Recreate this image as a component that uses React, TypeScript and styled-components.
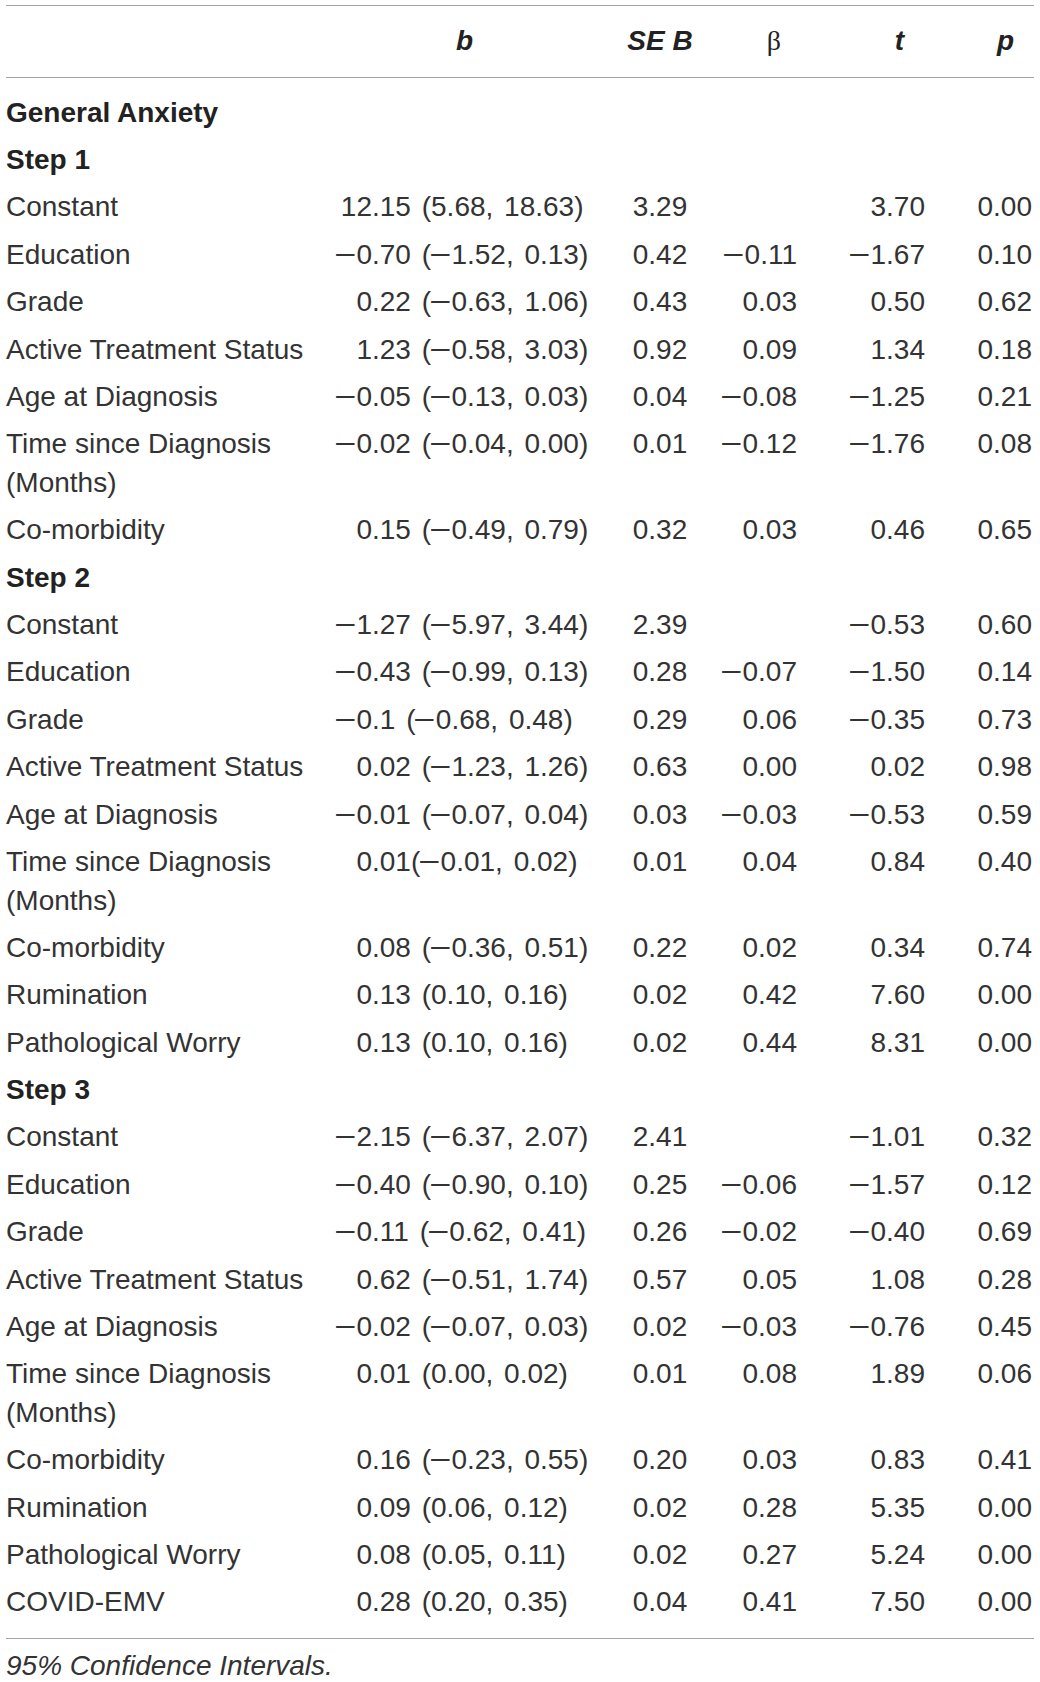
import React from "react";
import styled, { createGlobalStyle } from "styled-components";

const GlobalStyle = createGlobalStyle`
  html, body { margin: 0; padding: 0; background: #ffffff; }
  body {
    font-family: "Liberation Sans", Arial, Helvetica, sans-serif;
    font-size: 28px;
    color: #333333;
  }
`;

const RULE = "#a3a3a3";
const COLS = "324px 280px 100px 90px 128px 106px";

const Page = styled.div`
  padding: 5px 6px 0 6px;
  width: 1028px;
`;

const Table = styled.div`
  width: 1028px;
  border-top: 1px solid ${RULE};
`;

const Row = styled.div`
  display: grid;
  grid-template-columns: ${COLS};
`;

const HeadRow = styled(Row)`
  height: 71px;
  align-items: center;
  border-bottom: 1px solid ${RULE};
`;

const HeadCell = styled.div<{ $align?: string; $pl?: number; $pr?: number }>`
  font-weight: 700;
  font-style: italic;
  line-height: 38.6px;
  color: #222222;
  text-align: ${(p) => p.$align || "left"};
  padding-left: ${(p) => p.$pl ?? 0}px;
  padding-right: ${(p) => p.$pr ?? 0}px;
`;

const Beta = styled.span`
  font-family: "Liberation Serif", "Times New Roman", serif;
  font-style: normal;
  font-weight: 400;
`;

const Body = styled.div`
  padding: 11.3px 0 11.9px 0;
  border-bottom: 1px solid ${RULE};
`;

const SectionTitle = styled.div`
  font-weight: 700;
  line-height: 38.6px;
  padding: 4.4px 0;
  color: #222222;
`;

const Cell = styled.div<{ $align?: string; $pr?: number }>`
  line-height: 38.6px;
  padding: 4.4px ${(p) => p.$pr ?? 0}px 4.4px 0;
  text-align: ${(p) => p.$align || "left"};
  white-space: nowrap;
`;

const LabelCell = styled.div`
  line-height: 38.6px;
  padding: 4.4px 8px 4.4px 0;
`;

const EstCell = styled.div`
  line-height: 38.6px;
  padding: 4.4px 0;
  white-space: nowrap;
  word-spacing: 3px;
`;

const IntPart = styled.span`
  display: inline-block;
  width: 42px;
  text-align: right;
`;

const Minus = styled.span`
  display: inline-block;
  transform: scaleX(1.35);
  margin: 0 3px 0 1px;
  word-spacing: 0;
`;

const Footnote = styled.div`
  font-style: italic;
  line-height: 36px;
  padding-top: 9px;
`;

type DataRow = [string, string, string, string, string, string];

const sections: { title: string; rows: DataRow[] }[] = [
  {
    title: "Step 1",
    rows: [
      ["Constant", "12.15 (5.68, 18.63)", "3.29", "", "3.70", "0.00"],
      ["Education", "−0.70 (−1.52, 0.13)", "0.42", "−0.11", "−1.67", "0.10"],
      ["Grade", "0.22 (−0.63, 1.06)", "0.43", "0.03", "0.50", "0.62"],
      ["Active Treatment Status", "1.23 (−0.58, 3.03)", "0.92", "0.09", "1.34", "0.18"],
      ["Age at Diagnosis", "−0.05 (−0.13, 0.03)", "0.04", "−0.08", "−1.25", "0.21"],
      ["Time since Diagnosis (Months)", "−0.02 (−0.04, 0.00)", "0.01", "−0.12", "−1.76", "0.08"],
      ["Co-morbidity", "0.15 (−0.49, 0.79)", "0.32", "0.03", "0.46", "0.65"],
    ],
  },
  {
    title: "Step 2",
    rows: [
      ["Constant", "−1.27 (−5.97, 3.44)", "2.39", "", "−0.53", "0.60"],
      ["Education", "−0.43 (−0.99, 0.13)", "0.28", "−0.07", "−1.50", "0.14"],
      ["Grade", "−0.1 (−0.68, 0.48)", "0.29", "0.06", "−0.35", "0.73"],
      ["Active Treatment Status", "0.02 (−1.23, 1.26)", "0.63", "0.00", "0.02", "0.98"],
      ["Age at Diagnosis", "−0.01 (−0.07, 0.04)", "0.03", "−0.03", "−0.53", "0.59"],
      ["Time since Diagnosis (Months)", "0.01(−0.01, 0.02)", "0.01", "0.04", "0.84", "0.40"],
      ["Co-morbidity", "0.08 (−0.36, 0.51)", "0.22", "0.02", "0.34", "0.74"],
      ["Rumination", "0.13 (0.10, 0.16)", "0.02", "0.42", "7.60", "0.00"],
      ["Pathological Worry", "0.13 (0.10, 0.16)", "0.02", "0.44", "8.31", "0.00"],
    ],
  },
  {
    title: "Step 3",
    rows: [
      ["Constant", "−2.15 (−6.37, 2.07)", "2.41", "", "−1.01", "0.32"],
      ["Education", "−0.40 (−0.90, 0.10)", "0.25", "−0.06", "−1.57", "0.12"],
      ["Grade", "−0.11 (−0.62, 0.41)", "0.26", "−0.02", "−0.40", "0.69"],
      ["Active Treatment Status", "0.62 (−0.51, 1.74)", "0.57", "0.05", "1.08", "0.28"],
      ["Age at Diagnosis", "−0.02 (−0.07, 0.03)", "0.02", "−0.03", "−0.76", "0.45"],
      ["Time since Diagnosis (Months)", "0.01 (0.00, 0.02)", "0.01", "0.08", "1.89", "0.06"],
      ["Co-morbidity", "0.16 (−0.23, 0.55)", "0.20", "0.03", "0.83", "0.41"],
      ["Rumination", "0.09 (0.06, 0.12)", "0.02", "0.28", "5.35", "0.00"],
      ["Pathological Worry", "0.08 (0.05, 0.11)", "0.02", "0.27", "5.24", "0.00"],
      ["COVID-EMV", "0.28 (0.20, 0.35)", "0.04", "0.41", "7.50", "0.00"],
    ],
  },
];

function Num({ text }: { text: string }) {
  const parts = text.split("−");
  return (
    <>
      {parts.map((part, i) => (
        <React.Fragment key={i}>
          {i > 0 && <Minus>−</Minus>}
          {part}
        </React.Fragment>
      ))}
    </>
  );
}

function Estimate({ text }: { text: string }) {
  const dot = text.indexOf(".");
  const intPart = text.slice(0, dot);
  const rest = text.slice(dot);
  return (
    <EstCell>
      <IntPart>
        <Num text={intPart} />
      </IntPart>
      <Num text={rest} />
    </EstCell>
  );
}

function DataLine({ row }: { row: DataRow }) {
  const [label, b, se, beta, t, p] = row;
  return (
    <Row>
      <LabelCell>{label}</LabelCell>
      <Estimate text={b} />
      <Cell $align="center">
        <Num text={se} />
      </Cell>
      <Cell $align="right" $pr={3}>
        <Num text={beta} />
      </Cell>
      <Cell $align="right" $pr={3}>
        <Num text={t} />
      </Cell>
      <Cell $align="right" $pr={2}>
        <Num text={p} />
      </Cell>
    </Row>
  );
}

export default function App() {
  return (
    <>
      <GlobalStyle />
      <Page>
        <Table>
          <HeadRow>
            <HeadCell />
            <HeadCell $pl={126}>b</HeadCell>
            <HeadCell $align="center">SE B</HeadCell>
            <HeadCell $align="right" $pr={19}>
              <Beta>β</Beta>
            </HeadCell>
            <HeadCell $align="right" $pr={24}>
              t
            </HeadCell>
            <HeadCell $align="right" $pr={20}>
              p
            </HeadCell>
          </HeadRow>
          <Body>
            <SectionTitle>General Anxiety</SectionTitle>
            {sections.map((s) => (
              <React.Fragment key={s.title}>
                <SectionTitle>{s.title}</SectionTitle>
                {s.rows.map((r, i) => (
                  <DataLine key={i} row={r} />
                ))}
              </React.Fragment>
            ))}
          </Body>
        </Table>
        <Footnote>95% Confidence Intervals.</Footnote>
      </Page>
    </>
  );
}
